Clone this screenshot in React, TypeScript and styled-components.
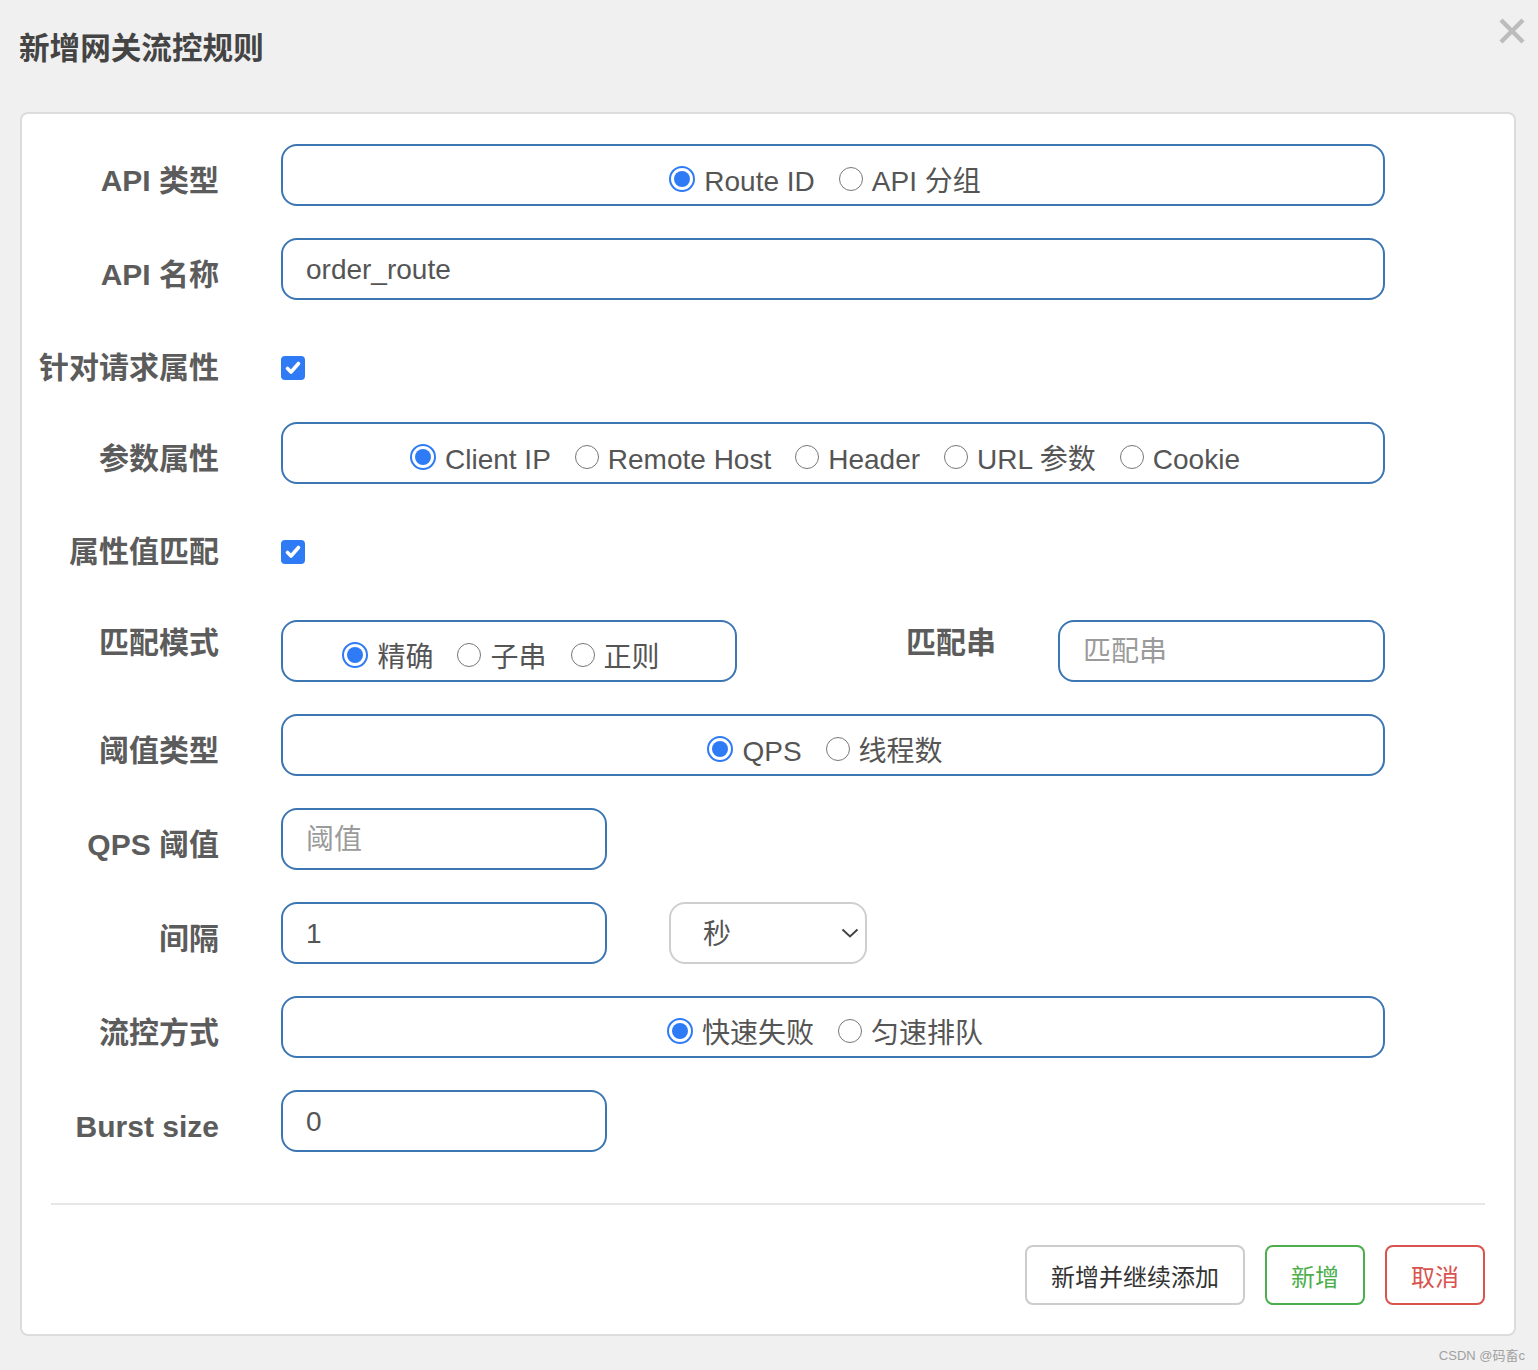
import React, { FC } from "react";
import styled, { createGlobalStyle } from "styled-components";

const GlobalStyle = createGlobalStyle`
  html, body {
    margin: 0;
    padding: 0;
    background: #f0f0f0;
  }
  body {
    font-family: "Liberation Sans", "Noto Sans CJK SC", sans-serif;
  }
  * {
    box-sizing: border-box;
  }
`;

interface RadioOption {
  label: string;
  checked?: boolean;
}

const RadioGroup: FC<{ options: RadioOption[]; width?: number }> = ({
  options,
  width,
}) => (
  <Group $w={width}>
    {options.map((o) => (
      <RadioItem key={o.label}>
        <Circle $checked={!!o.checked} />
        {o.label}
      </RadioItem>
    ))}
  </Group>
);

const Checkbox: FC = () => (
  <CheckBox>
    <svg width="18" height="18" viewBox="0 0 18 18">
      <path
        d="M3.5 9.5 L7 13 L14.5 4.5"
        fill="none"
        stroke="#fff"
        strokeWidth="3.6"
        strokeLinecap="round"
        strokeLinejoin="round"
      />
    </svg>
  </CheckBox>
);

const App: FC = () => {
  return (
    <Page>
      <GlobalStyle />
      <Header>
        <Title>新增网关流控规则</Title>
        <Close aria-label="close">
          <svg width="28" height="28" viewBox="0 0 28 28">
            <path
              d="M3 3 L25 25 M25 3 L3 25"
              stroke="#bcbcbc"
              strokeWidth="4.5"
            />
          </svg>
        </Close>
      </Header>
      <Panel>
        <Row $mt={0}>
          <Label $pt={11}>API 类型</Label>
          <RadioGroup
            options={[{ label: "Route ID", checked: true }, { label: "API 分组" }]}
          />
        </Row>
        <Row $mt={32}>
          <Label $pt={11}>API 名称</Label>
          <TextInput defaultValue="order_route" />
        </Row>
        <Row $mt={51}>
          <Label>针对请求属性</Label>
          <Checkbox />
        </Row>
        <Row $mt={37}>
          <Label $pt={11}>参数属性</Label>
          <RadioGroup
            options={[
              { label: "Client IP", checked: true },
              { label: "Remote Host" },
              { label: "Header" },
              { label: "URL 参数" },
              { label: "Cookie" },
            ]}
          />
        </Row>
        <Row $mt={51}>
          <Label>属性值匹配</Label>
          <Checkbox />
        </Row>
        <Row $mt={51}>
          <Label $pb={16}>匹配模式</Label>
          <Split>
            <RadioGroup
              width={456}
              options={[
                { label: "精确", checked: true },
                { label: "子串" },
                { label: "正则" },
              ]}
            />
            <SubLabel>匹配串</SubLabel>
            <TextInput $w={327} placeholder="匹配串" />
          </Split>
        </Row>
        <Row $mt={32}>
          <Label $pt={11}>阈值类型</Label>
          <RadioGroup
            options={[{ label: "QPS", checked: true }, { label: "线程数" }]}
          />
        </Row>
        <Row $mt={32}>
          <Label $pt={11}>QPS 阈值</Label>
          <TextInput $w={326} placeholder="阈值" />
        </Row>
        <Row $mt={32}>
          <Label $pt={11}>间隔</Label>
          <Split $gap={62}>
            <TextInput $w={326} defaultValue="1" />
            <SelectBox>
              <span>秒</span>
              <svg width="18" height="10" viewBox="0 0 18 10">
                <path
                  d="M1.5 1.5 L9 8.5 L16.5 1.5"
                  fill="none"
                  stroke="#444"
                  strokeWidth="2"
                />
              </svg>
            </SelectBox>
          </Split>
        </Row>
        <Row $mt={32}>
          <Label $pt={11}>流控方式</Label>
          <RadioGroup
            options={[{ label: "快速失败", checked: true }, { label: "匀速排队" }]}
          />
        </Row>
        <Row $mt={32}>
          <Label $pt={11}>Burst size</Label>
          <TextInput $w={326} defaultValue="0" />
        </Row>
        <Divider />
        <Footer>
          <Button>新增并继续添加</Button>
          <Button $tone="#4cae4c">新增</Button>
          <Button $tone="#d9534f">取消</Button>
        </Footer>
      </Panel>
      <Watermark>CSDN @码畜c</Watermark>
    </Page>
  );
};

const Page = styled.div`
  width: 1538px;
  height: 1370px;
  background: #f0f0f0;
`;
const Header = styled.div`
  height: 112px;
  display: flex;
  justify-content: space-between;
  align-items: flex-start;
  padding: 17px 12px 0 19px;
`;
const Title = styled.h1`
  margin: 13px 0 0;
  font-size: 30.6px;
  line-height: 36px;
  font-weight: 700;
  color: #444;
`;
const Close = styled.button`
  border: 0;
  background: none;
  padding: 0;
  width: 28px;
  height: 28px;
  display: flex;
  cursor: pointer;
`;
const Panel = styled.div`
  margin: 0 22px 0 20px;
  background: #fff;
  border: 2px solid #dcdcdc;
  border-radius: 8px;
  padding: 30px 0 29px;
`;
const Row = styled.div<{ $mt: number }>`
  display: grid;
  grid-template-columns: 197px 1104px;
  column-gap: 62px;
  align-items: center;
  margin-top: ${(p) => p.$mt}px;
`;
const Label = styled.div<{ $pt?: number; $pb?: number }>`
  text-align: right;
  font-size: 30px;
  line-height: 34px;
  font-weight: 700;
  color: #5c5c5c;
  padding-top: ${(p) => p.$pt || 0}px;
  padding-bottom: ${(p) => p.$pb || 0}px;
  white-space: nowrap;
`;
const SubLabel = styled(Label)`
  width: 259px;
  margin-right: 62px;
  padding-bottom: 16px;
`;
const Split = styled.div<{ $gap?: number }>`
  display: flex;
  align-items: center;
  gap: ${(p) => p.$gap || 0}px;
`;
const Group = styled.div<{ $w?: number }>`
  width: ${(p) => (p.$w ? `${p.$w}px` : "100%")};
  height: 62px;
  border: 2px solid #3c76b3;
  border-radius: 16px;
  display: flex;
  align-items: center;
  justify-content: center;
  gap: 24px;
  padding: 13px 16px 0 0;
`;
const RadioItem = styled.label`
  display: flex;
  align-items: center;
  gap: 9px;
  font-size: 28px;
  line-height: 32px;
  color: #555;
  white-space: nowrap;
`;
const Circle = styled.span<{ $checked: boolean }>`
  width: ${(p) => (p.$checked ? 26 : 24)}px;
  height: ${(p) => (p.$checked ? 26 : 24)}px;
  border-radius: 50%;
  border: ${(p) => (p.$checked ? "2px solid #2f7bf5" : "1.5px solid #777")};
  background: #fff;
  margin-bottom: 6px;
  display: flex;
  align-items: center;
  justify-content: center;
  flex-shrink: 0;
  &::after {
    content: "";
    display: ${(p) => (p.$checked ? "block" : "none")};
    width: 16px;
    height: 16px;
    border-radius: 50%;
    background: #2f7bf5;
  }
`;
const TextInput = styled.input<{ $w?: number }>`
  width: ${(p) => (p.$w ? `${p.$w}px` : "100%")};
  height: 62px;
  border: 2px solid #3c76b3;
  border-radius: 16px;
  padding: 2px 20px 0 23px;
  font-family: inherit;
  font-size: 28px;
  color: #555;
  background: #fff;
  outline: none;
  &::placeholder {
    color: #9b9b9b;
  }
`;
const CheckBox = styled.span`
  width: 24px;
  height: 24px;
  border-radius: 4px;
  background: #2f7bf5;
  display: flex;
  align-items: center;
  justify-content: center;
`;
const SelectBox = styled.div`
  width: 198px;
  height: 62px;
  border: 2px solid #cfcfcf;
  border-radius: 16px;
  display: flex;
  align-items: center;
  justify-content: space-between;
  padding: 0 6px 0 32px;
  font-size: 28px;
  color: #555;
  background: #fff;
  & > span {
    padding-bottom: 2px;
  }
`;
const Divider = styled.div`
  height: 2px;
  background: #e6e6e6;
  margin: 51px 29px 0;
`;
const Footer = styled.div`
  display: flex;
  justify-content: flex-end;
  gap: 20px;
  margin-top: 40px;
  padding: 0 29px;
`;
const Button = styled.button<{ $tone?: string }>`
  height: 60px;
  padding: 0 24px;
  border: 2px solid ${(p) => p.$tone || "#cccccc"};
  border-radius: 8px;
  background: #fff;
  color: ${(p) => p.$tone || "#333"};
  font-family: inherit;
  font-size: 24px;
  cursor: pointer;
`;
const Watermark = styled.div`
  height: 34px;
  display: flex;
  align-items: center;
  justify-content: flex-end;
  padding: 2px 13px 0 0;
  font-size: 13px;
  color: #a0a0a0;
`;

export default App;
